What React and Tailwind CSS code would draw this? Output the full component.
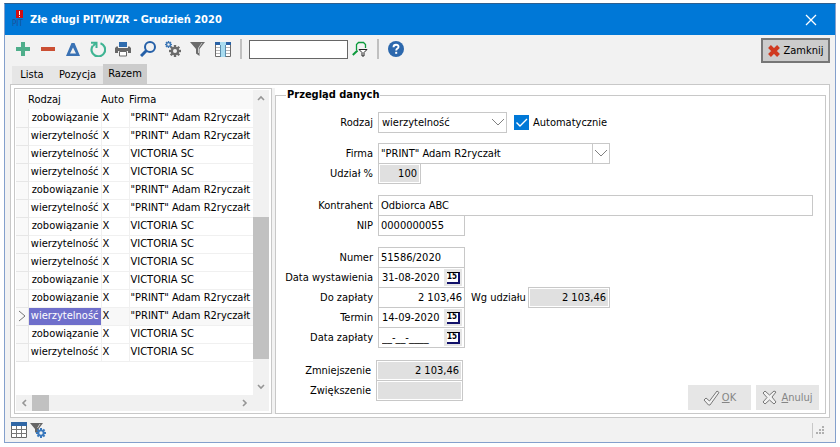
import React from "react";

const rows = [
  ["zobowiązanie", "\"PRINT\" Adam R2ryczałt"],
  ["wierzytelność", "\"PRINT\" Adam R2ryczałt"],
  ["wierzytelność", "VICTORIA SC"],
  ["wierzytelność", "VICTORIA SC"],
  ["zobowiązanie", "\"PRINT\" Adam R2ryczałt"],
  ["wierzytelność", "\"PRINT\" Adam R2ryczałt"],
  ["zobowiązanie", "VICTORIA SC"],
  ["wierzytelność", "VICTORIA SC"],
  ["wierzytelność", "VICTORIA SC"],
  ["zobowiązanie", "VICTORIA SC"],
  ["zobowiązanie", "\"PRINT\" Adam R2ryczałt"],
  ["wierzytelność", "\"PRINT\" Adam R2ryczałt"],
  ["zobowiązanie", "VICTORIA SC"],
  ["wierzytelność", "VICTORIA SC"],
];
const selectedRow = 11;

const teeth = [0, 45, 90, 135, 180, 225, 270, 315];

function Gear({ x, y, r, color, hole }) {
  return (
    <g transform={`translate(${x} ${y})`}>
      {teeth.map((a) => (
        <rect key={a} x={-r * 0.2} y={-r} width={r * 0.4} height={r} fill={color} transform={`rotate(${a})`} />
      ))}
      <circle r={r * 0.72} fill={color} />
      <circle r={r * 0.34} fill={hole} />
    </g>
  );
}

function Icon({ children, className = "h-4 w-4" }) {
  return (
    <svg viewBox="0 0 16 16" className={className} fill="none" aria-hidden="true">
      {children}
    </svg>
  );
}

const tools = [
  ["Dodaj", <path d="M6 1h4v5h5v4h-5v5H6v-5H1V6h5z" fill="#4fae8b" />],
  ["Usuń", <path d="M1 6h14v4H1z" fill="#cb4f33" />],
  ["Popraw", <path fillRule="evenodd" d="M6.500 2h3L15 15H1zM8 6.500L5 12.500h6z" fill="#3a72b4" />],
  ["Odśwież", (
    <>
      <path d="M2.700 4.800A6.800 6.800 0 1 0 10.500 2.200" stroke="#3fb493" strokeWidth="2.200" />
      <path d="M1 1.700h5.500V7" stroke="#3fb493" strokeWidth="2" />
      <path d="M3 5l3-3" stroke="#3fb493" strokeWidth="2" />
    </>
  )],
  ["Drukuj", (
    <>
      <path d="M4 1h8v5H4z" fill="#2f6cae" />
      <path d="M1.500 5.500H3V7h10V5.500h1.500L16 7v5h-3v-2H3v2H0V7z" fill="#686868" />
      <path d="M4.500 10.500h7v4.500h-7z" fill="#fff" stroke="#686868" />
    </>
  )],
  ["Szukaj", (
    <>
      <circle cx="10" cy="6" r="5" stroke="#2560a8" strokeWidth="2" />
      <path d="M6.500 9.500L1 15" stroke="#2560a8" strokeWidth="3" />
    </>
  )],
  ["Ustawienia", (
    <>
      <Gear x={3.5} y={3.5} r={3.5} color="#3c76b5" hole="#f2f2f2" />
      <Gear x={10} y={10} r={6} color="#6b6b6b" hole="#f2f2f2" />
    </>
  )],
  ["Filtr", (
    <>
      <path d="M0 1h15L9.500 8v7L6 12.500V8z" fill="#6b6b6b" />
      <path d="M12 2L8.500 7v5" stroke="#c9c9c9" />
    </>
  )],
  ["Kolumny", (
    <>
      <path d="M.5 1.500h15v14H.5z" fill="#fff" stroke="#6b6b6b" />
      <path d="M0 1h16v3H0z" fill="#2a62a5" />
      <path d="M1 6.500h14M1 9.500h14M1 12.500h14" stroke="#b5b5b5" />
      <path d="M5 1h6v15H5z" fill="#a9dcf0" />
      <path d="M5.500 4v12M10.500 4v12" stroke="#5b8fae" />
    </>
  )],
];

function ToolButton({ label, children }) {
  return (
    <button type="button" aria-label={label} className="h-4 w-4 shrink-0">
      <Icon>{children}</Icon>
    </button>
  );
}

function ScrollArrow({ d }) {
  return (
    <span className="flex h-4 w-4 shrink-0 items-center justify-center">
      <svg viewBox="0 0 8 8" className="h-2 w-2" fill="none" stroke="#969696" strokeWidth="1.600">
        <path d={d} />
      </svg>
    </span>
  );
}

function Chevron() {
  return (
    <svg viewBox="0 0 14 8" className="pointer-events-none absolute top-1.5 right-0.5 h-2 w-3.5" fill="none" stroke="#808080">
      <path d="M1 1l6 6 6-6" />
    </svg>
  );
}

const box = "h-[21px] border border-[#c8c8c8] bg-white";
const field = "h-[21px] border border-[#c8c8c8] bg-white px-0.5 outline-none";
const grayField = "h-[21px] border border-[#c8c8c8] bg-[#e0e0e0] px-[3px] text-right shadow-[inset_0_0_0_1px_#fff] outline-none";

function Row({ label, id, className = "", labelWidth = "w-[97px]", children }) {
  return (
    <div className={`flex items-center ${className}`}>
      <label htmlFor={id} className={`mr-[5px] shrink-0 text-right whitespace-nowrap ${labelWidth}`}>
        {label}
      </label>
      {children}
    </div>
  );
}

function DateField({ id, value }) {
  return (
    <div className={`flex w-[87px] items-center ${box}`}>
      <input id={id} defaultValue={value} className="w-[65px] shrink-0 bg-transparent pl-[3px] outline-none" />
      <button type="button" aria-label="Kalendarz" className="flex h-[17px] w-[18px] items-center justify-center bg-[#e6e6e6]">
        <span className="flex h-3 w-[13px] items-center justify-center border-t border-r-2 border-b-2 border-t-black border-r-[#11116a] border-b-[#11116a] bg-white text-[8px] leading-none font-bold text-black">
          15
        </span>
      </button>
    </div>
  );
}

export default function App() {
  return (
    <div className="bg-white px-1 pt-[3px] pb-1 font-['DejaVu_Sans_Condensed','DejaVu_Sans',sans-serif] text-[11px] leading-[14px] text-black">
      <div className="border border-t-[#2c5f90] border-r-[#84a0cc] border-b-[#84a0cc] border-l-[#84a0cc] bg-[#f2f2f2]">
        <header className="flex h-[31px] items-center bg-[#0078d7] pr-[18px] pl-[7px] text-white">
          <svg viewBox="0 0 16 20" className="mr-0.5 h-5 w-4 shrink-0" aria-hidden="true">
            <path d="M4 0h7v8H4z" fill="#cf0d12" />
            <path d="M7 1h1v4H7zM7 6h1v1H7z" fill="#fff" />
            <text x="0" y="16" fontSize="8" fill="#1d4f94">PIT</text>
          </svg>
          <h1 className="grow text-[11px] font-bold">Złe długi PIT/WZR - Grudzień 2020</h1>
          <button type="button" aria-label="Zamknij okno" className="h-3 w-3">
            <svg viewBox="0 0 12 12" className="h-3 w-3" stroke="#fff" strokeWidth="1.300">
              <path d="M1 1l10 10M11 1L1 11" />
            </svg>
          </button>
        </header>

        <div className="flex items-start justify-between pt-[3px] pr-[5px] pl-2.5">
          <div className="flex h-[22px] items-center gap-[9px]">
            {tools.map(([label, art]) => (
              <ToolButton key={label} label={label}>{art}</ToolButton>
            ))}
            <div className="flex items-center gap-[7px]">
              <span className="h-5 w-0.5 bg-[#c0c0c0]" />
              <div className="flex items-center gap-1">
                <input aria-label="Szukany tekst" className="h-[19px] w-[99px] border border-[#666] bg-white px-1 outline-none" />
                <ToolButton label="Filtruj">
                  <path d="M4.500 9V3.500L6.500 1.500h5l2 2V7" stroke="#0c9a3c" strokeWidth="1.300" />
                  <path d="M5.500 9.500L.8 14" stroke="#0c9a3c" strokeWidth="2" />
                  <path d="M7 8.500h8l-3 3V15h-2v-3.500z" fill="#fff" stroke="#222" />
                </ToolButton>
              </div>
            </div>
            <span className="h-5 w-0.5 bg-[#c0c0c0]" />
            <button type="button" aria-label="Pomoc" className="h-4 w-4">
              <Icon>
                <circle cx="8" cy="8" r="8" fill="#2c68ad" />
                <path d="M5.500 6.200C5.500 2.800 10.700 3 10.500 6c-.1 1.600-2.300 1.600-2.300 3.500" stroke="#fff" strokeWidth="1.900" />
                <path d="M7.200 10.800h2v2h-2z" fill="#fff" />
              </Icon>
            </button>
          </div>
          <button type="button" className="flex h-[25px] w-[69px] items-center justify-center gap-1 border-2 border-[#777] bg-[#ccc]">
            <svg viewBox="0 0 12 12" className="h-3 w-3 shrink-0" stroke="#d0391f" strokeWidth="4" fill="none">
              <path d="M1.500 1.500l9 9M10.500 1.500l-9 9" />
            </svg>
            Zamknij
          </button>
        </div>

        <nav role="tablist" className="mt-px flex items-end pl-[7px]">
          <button type="button" role="tab" aria-selected="false" className="h-[18px] w-10 bg-[#e6e6e6]">Lista</button>
          <button type="button" role="tab" aria-selected="false" className="h-[18px] w-[51px] bg-[#e6e6e6]">Pozycja</button>
          <button type="button" role="tab" aria-selected="true" className="h-5 w-11 bg-[#ccc]">Razem</button>
        </nav>

        <main className="mx-[5px] flex border border-[#c8c8c8] bg-white p-[3px]">
          <section className="flex w-[258px] shrink-0 flex-col border border-[#c8c8c8] bg-white p-px pr-0.5 pb-0.5">
            <div className="flex grow">
              <div className="grow">
                <table className="w-full table-fixed border-collapse">
                  <colgroup>
                    <col className="w-3" />
                    <col className="w-[73px]" />
                    <col className="w-7" />
                    <col />
                  </colgroup>
                  <thead>
                    <tr className="h-[19px] bg-[#f9f9f9] text-left">
                      <th className="p-0" />
                      <th className="p-0 font-normal">Rodzaj</th>
                      <th className="p-0 font-normal">Auto</th>
                      <th className="p-0 font-normal">Firma</th>
                    </tr>
                  </thead>
                  <tbody>
                    {rows.map(([kind, firm], i) => (
                      <tr key={i} className={i === selectedRow ? "h-[18px] bg-[#f8f8f8]" : "h-[18px]"}>
                        <td className="border-r border-b border-[#e6e6e6] bg-[#f9f9f9] p-0">
                          {i === selectedRow && (
                            <svg viewBox="0 0 8 12" className="ml-0.5 h-3 w-2" fill="none" stroke="#777">
                              <path d="M1 1l6 5-6 5" />
                            </svg>
                          )}
                        </td>
                        <td
                          className={
                            i === selectedRow
                              ? "border-r border-b border-[#f0f0f0] bg-[#6f6fcb] p-0 pr-0.5 text-right text-white"
                              : "border-r border-b border-[#f0f0f0] p-0 pr-0.5 text-right"
                          }
                        >
                          {kind}
                        </td>
                        <td className="border-r border-b border-[#f0f0f0] p-0 pl-px">X</td>
                        <td className="border-b border-[#f0f0f0] p-0 pl-px whitespace-nowrap">{firm}</td>
                      </tr>
                    ))}
                  </tbody>
                </table>
              </div>
              <div className="flex w-4 shrink-0 flex-col bg-[#f1f1f1]">
                <ScrollArrow d="M1 6l3-3 3 3" />
                <div className="flex min-h-0 grow flex-col">
                  <span className="grow-[111]" />
                  <span className="grow-[141] bg-[#c1c1c1]" />
                  <span className="grow-[20]" />
                </div>
                <ScrollArrow d="M1 2l3 3 3-3" />
              </div>
            </div>
            <div className="flex h-4 bg-[#f1f1f1]">
              <ScrollArrow d="M6 1L3 4l3 3" />
              <span className="w-[17px] bg-[#c1c1c1]" />
              <span className="grow" />
              <ScrollArrow d="M2 1l3 3-3 3" />
              <span className="w-4" />
            </div>
          </section>

          <div className="w-[3px] shrink-0 bg-[#f2f2f2]" />

          <fieldset className="min-w-0 grow border border-[#c8c8c8] pb-[3px]">
            <legend className="ml-2.5 px-px text-[11px] leading-[14px] font-bold">Przegląd danych</legend>

            <Row label="Rodzaj" id="rodzaj" className="pt-2.5">
              <div className="relative">
                <select id="rodzaj" className={`w-[129px] appearance-none pl-[3px] outline-none ${box}`}>
                  <option>wierzytelność</option>
                </select>
                <Chevron />
              </div>
              <label className="ml-[7px] flex items-center gap-1">
                <span className="relative h-[15px] w-[15px]">
                  <input type="checkbox" defaultChecked className="block h-[15px] w-[15px] appearance-none bg-[#0078d7]" />
                  <svg viewBox="0 0 15 15" className="pointer-events-none absolute inset-0" fill="none" stroke="#fff" strokeWidth="1.400">
                    <path d="M2.500 7.500l3.500 3.500 7-7" />
                  </svg>
                </span>
                Automatycznie
              </label>
            </Row>

            <Row label="Firma" id="firma" className="pt-2.5">
              <div className="relative">
                <select id="firma" className={`w-[232px] appearance-none pl-0.5 outline-none ${box}`}>
                  <option>"PRINT" Adam R2ryczałt</option>
                </select>
                <span className="pointer-events-none absolute top-0 right-[17px] h-[21px] w-px bg-[#c8c8c8]" />
                <Chevron />
              </div>
            </Row>
            <Row label="Udział %" id="udzial" className="-mt-px">
              <input id="udzial" readOnly defaultValue="100" className={`w-[43px] ${grayField}`} />
            </Row>

            <Row label="Kontrahent" id="kontrahent" className="pt-[11px] pr-3">
              <input id="kontrahent" defaultValue="Odbiorca ABC" className={`min-w-0 grow ${field}`} />
            </Row>
            <Row label="NIP" id="nip" className="-mt-px">
              <input id="nip" defaultValue="0000000055" className={`w-[87px] ${field}`} />
            </Row>

            <Row label="Numer" id="numer" className="pt-[11px]">
              <input id="numer" defaultValue="51586/2020" className={`w-[87px] ${field}`} />
            </Row>
            <Row label="Data wystawienia" id="wystawienie" className="-mt-px">
              <DateField id="wystawienie" value="31-08-2020" />
            </Row>
            <Row label="Do zapłaty" id="kwota" className="-mt-px">
              <input id="kwota" defaultValue="2 103,46" className={`w-[87px] text-right ${field}`} />
              <label htmlFor="wg" className="mr-[5px] ml-1.5 w-[52px] text-right whitespace-nowrap">Wg udziału</label>
              <input id="wg" readOnly defaultValue="2 103,46" className={`w-[82px] ${grayField}`} />
            </Row>
            <Row label="Termin" id="termin" className="-mt-px">
              <DateField id="termin" value="14-09-2020" />
            </Row>
            <Row label="Data zapłaty" id="zaplata" className="-mt-px">
              <DateField id="zaplata" value="__-__-____" />
            </Row>

            <div className="flex justify-between pt-3 pr-1.5">
              <div className="pb-[9px]">
                <Row label="Zmniejszenie" id="zmniejszenie" labelWidth="w-[95px]">
                  <input id="zmniejszenie" readOnly defaultValue="2 103,46" className={`w-[87px] ${grayField}`} />
                </Row>
                <Row label="Zwiększenie" id="zwiekszenie" labelWidth="w-[95px]" className="-mt-px">
                  <input id="zwiekszenie" readOnly className={`w-[87px] ${grayField}`} />
                </Row>
              </div>
              <div className="flex items-end gap-[5px]">
                <button type="button" disabled className="flex h-[25px] w-[63px] items-center justify-center gap-0.5 bg-[#e6e6e6] text-[#858585]">
                  <svg viewBox="0 0 17 16" className="h-4 w-[17px]" fill="#f2f2f2" stroke="#777">
                    <path d="M1 10l2-2 3.500 3L14 1l2 1.500L7 15H5.500z" />
                  </svg>
                  <span><u>O</u>K</span>
                </button>
                <button type="button" disabled className="flex h-[25px] w-[63px] items-center justify-center gap-1 bg-[#e6e6e6] text-[#858585]">
                  <svg viewBox="0 0 15 15" className="h-[15px] w-[15px]" fill="#f2f2f2" stroke="#777">
                    <path d="M1 3l2-2 4.500 4L12 1l2 1-4 5 4 5-2 2-4.500-4L3 14l-2-2 4-4.500z" />
                  </svg>
                  <span><u>A</u>nuluj</span>
                </button>
              </div>
            </div>
          </fieldset>
        </main>

        <footer className="flex h-6 items-center justify-between pr-2.5 pl-1.5">
          <div className="flex gap-[3px]">
            <Icon>
              <path d="M.5.500h15v15H.5z" fill="#fff" stroke="#666" />
              <path d="M0 0h16v4H0z" fill="#2f66a5" />
              <path d="M0 7.500h16M0 11.500h16M5.500 4v12M10.500 4v12" stroke="#777" />
            </Icon>
            <Icon>
              <path d="M0 1h13L8.500 7v6L5 10V7z" fill="#666" />
              <path d="M10 2L7.500 6" stroke="#ccc" />
              <Gear x={11} y={11} r={5} color="#3978bd" hole="#f2f2f2" />
            </Icon>
          </div>
          <div className="flex items-center gap-[3px]">
            <span className="h-[15px] w-px bg-[#c8c8c8]" />
            <svg viewBox="0 0 9 9" className="h-[9px] w-[9px]" fill="#b0b0b0">
              <path d="M0 6h2v2H0zM3 6h2v2H3zM6 6h2v2H6zM3 3h2v2H3zM6 3h2v2H6zM6 0h2v2H6z" />
            </svg>
          </div>
        </footer>
      </div>
    </div>
  );
}
